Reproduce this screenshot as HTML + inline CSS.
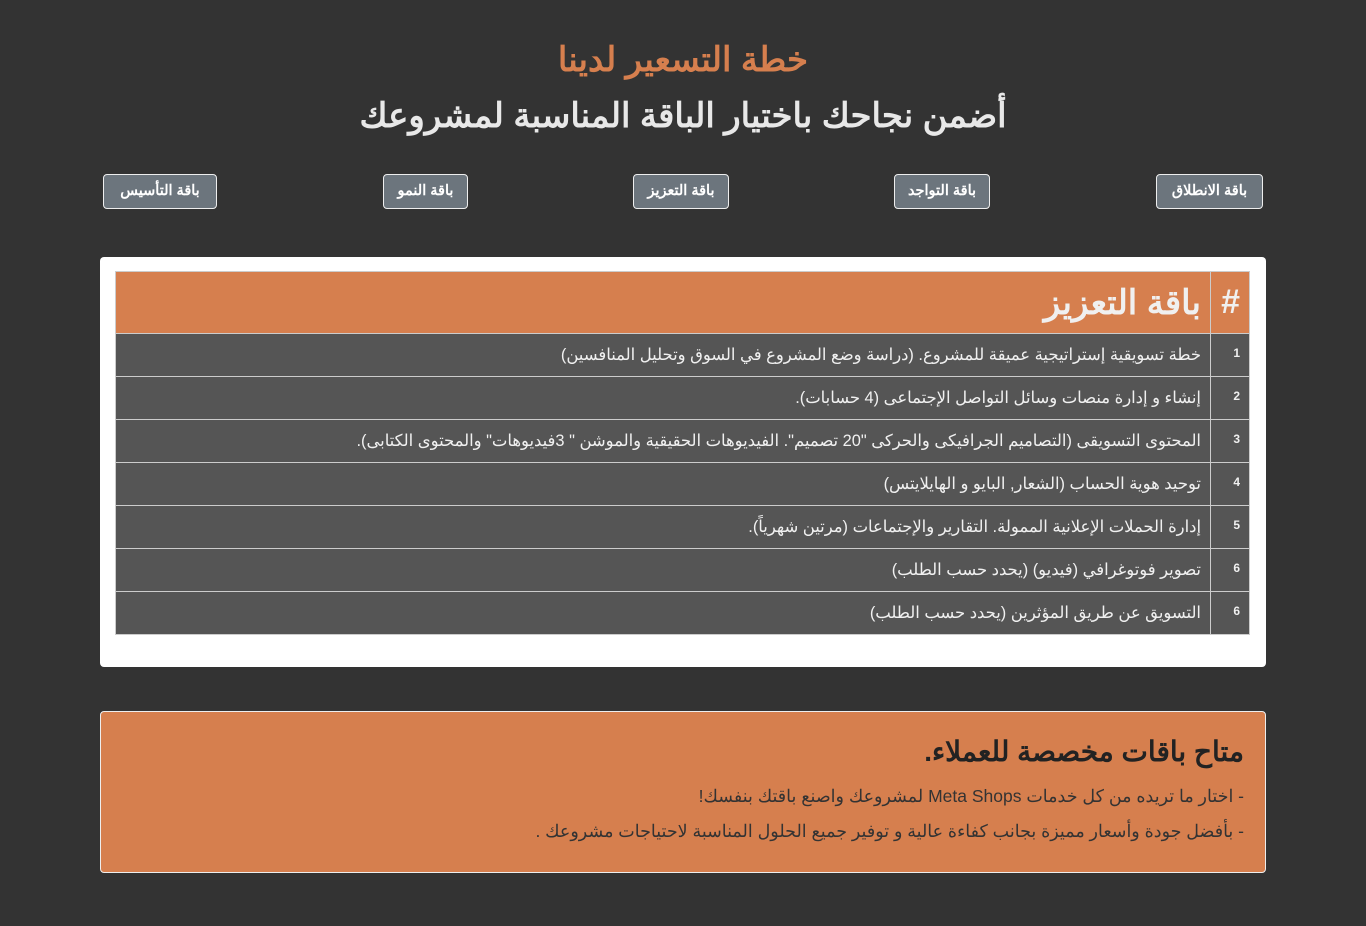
<!DOCTYPE html>
<html dir="rtl" lang="ar"><head><meta charset="utf-8"><style>
body{margin:0;background:#333;width:1366px;height:926px;overflow:hidden;font-family:"Liberation Sans","Noto Sans CJK SC",sans-serif;}
h1{position:absolute;top:40px;left:0;width:1366px;margin:0;text-align:center;color:#d67f4e;font-size:34px;font-weight:bold;line-height:40px}
h2{position:absolute;top:96px;left:0;width:1366px;margin:0;text-align:center;color:#e8e8e8;font-size:34px;font-weight:bold;line-height:40px}
.btn{position:absolute;top:174px;background:#6c757d;border:1px solid #eee;border-radius:4px;color:#fff;font-size:14.5px;font-weight:bold;line-height:33px;text-align:center;box-sizing:border-box;height:35px;white-space:nowrap}
.card{position:absolute;left:100px;top:257px;width:1166px;height:410px;background:#fff;border-radius:4px;box-sizing:border-box}
table{position:absolute;left:15px;top:14px;width:1135px;border-collapse:collapse}
td,th{border:1px solid #ccc;color:#f0f0f0;padding:0 9px;text-align:right}
th{background:#d67f4e;height:61px;font-size:34px;font-weight:bold}
td{background:#555;height:42px;font-size:16.4px}
td.n{width:20px;font-size:12px;font-weight:bold;vertical-align:top;padding-top:12px;height:30px}
.box{position:absolute;left:100px;top:711px;width:1166px;height:162px;background:#d67f4e;border:1px solid #eee;border-radius:4px;box-sizing:border-box;padding:0 21px;color:#333}
.box h3{margin:24px 0 18px;font-size:28px;color:#222;line-height:32px}
.box p{margin:0 0 14px;font-size:17.5px;line-height:21px}
</style></head><body>
<h1>خطة التسعير لدينا</h1>
<h2>أضمن نجاحك باختيار الباقة المناسبة لمشروعك</h2>
<div class="btn" style="left:1156px;width:107px">باقة الانطلاق</div>
<div class="btn" style="left:894px;width:96px">باقة التواجد</div>
<div class="btn" style="left:633px;width:96px">باقة التعزيز</div>
<div class="btn" style="left:383px;width:85px">باقة النمو</div>
<div class="btn" style="left:103px;width:114px">باقة التأسيس</div>
<div class="card"><table>
<tr><th style="width:20px">#</th><th>باقة التعزيز</th></tr>
<tr><td class="n">1</td><td>خطة تسويقية إستراتيجية عميقة للمشروع. (دراسة وضع المشروع في السوق وتحليل المنافسين)</td></tr>
<tr><td class="n">2</td><td>إنشاء و إدارة منصات وسائل التواصل الإجتماعى (4 حسابات).</td></tr>
<tr><td class="n">3</td><td>المحتوى التسويقى (التصاميم الجرافيكى والحركى "20 تصميم". الفيديوهات الحقيقية والموشن " 3فيديوهات" والمحتوى الكتابى).</td></tr>
<tr><td class="n">4</td><td>توحيد هوية الحساب (الشعار, البايو و الهايلايتس)</td></tr>
<tr><td class="n">5</td><td>إدارة الحملات الإعلانية الممولة. التقارير والإجتماعات (مرتين شهرياً).</td></tr>
<tr><td class="n">6</td><td>تصوير فوتوغرافي (فيديو) (يحدد حسب الطلب)</td></tr>
<tr><td class="n">6</td><td>التسويق عن طريق المؤثرين (يحدد حسب الطلب)</td></tr>
</table></div>
<div class="box"><h3>متاح باقات مخصصة للعملاء.</h3>
<p>- اختار ما تريده من كل خدمات Meta Shops لمشروعك واصنع باقتك بنفسك!</p>
<p>- بأفضل جودة وأسعار مميزة بجانب كفاءة عالية و توفير جميع الحلول المناسبة لاحتياجات مشروعك .</p></div>
</body></html>
